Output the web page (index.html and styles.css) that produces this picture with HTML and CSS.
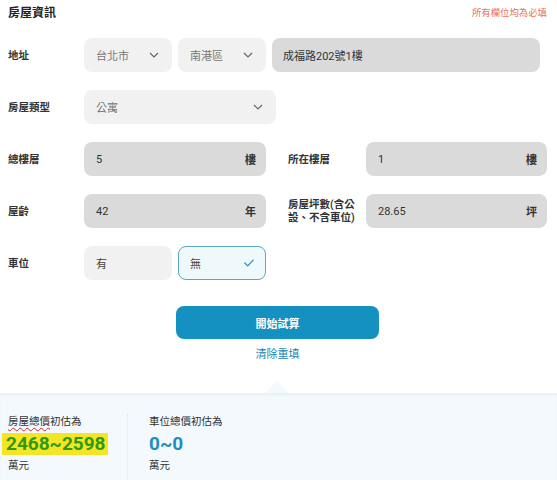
FILE: index.html
```html
<!DOCTYPE html>
<html lang="zh-Hant">
<head>
<meta charset="utf-8">
<title>房屋資訊</title>
<link rel="stylesheet" href="styles.css">
</head>
<body>
<div class="card">
  <div class="header">
    <h1 class="title">房屋資訊</h1>
    <span class="note">所有欄位均為必填</span>
  </div>
  <div class="form">
    <div class="label">地址</div>
    <div class="addr">
      <div class="select w88"><span>台北市</span><svg class="chev" viewBox="0 0 10 6"><polyline points="1,1 5,5 9,1"/></svg></div>
      <div class="select w88"><span>南港區</span><svg class="chev" viewBox="0 0 10 6"><polyline points="1,1 5,5 9,1"/></svg></div>
      <div class="input addr-input"><span class="val">成福路202號1樓</span></div>
    </div>

    <div class="label">房屋類型</div>
    <div class="span3">
      <div class="select w192"><span>公寓</span><svg class="chev" viewBox="0 0 10 6"><polyline points="1,1 5,5 9,1"/></svg></div>
    </div>

    <div class="label">總樓層</div>
    <div class="input"><span class="val">5</span><span class="unit">樓</span></div>
    <div class="label label2">所在樓層</div>
    <div class="input"><span class="val">1</span><span class="unit">樓</span></div>

    <div class="label">屋齡</div>
    <div class="input"><span class="val">42</span><span class="unit">年</span></div>
    <div class="label label2">房屋坪數(含公設、不含車位)</div>
    <div class="input"><span class="val">28.65</span><span class="unit">坪</span></div>

    <div class="label">車位</div>
    <div class="choices">
      <div class="choice w88">有</div>
      <div class="choice w88 active"><span>無</span><svg class="check" viewBox="0 0 12 9"><polyline points="1,4.5 4.5,8 11,1"/></svg></div>
    </div>
  </div>
  <div class="actions">
    <button class="btn">開始試算</button>
    <a class="reset" href="#">清除重填</a>
  </div>
</div>
<div class="result">
  <div class="col">
    <div class="cap"><span class="squiggle">房屋總價</span>初估為</div>
    <div class="num green"><span class="hl">2468~2598</span></div>
    <div class="cap">萬元</div>
  </div>
  <div class="col col2">
    <div class="cap">車位總價初估為</div>
    <div class="num blue">0~0</div>
    <div class="cap">萬元</div>
  </div>
</div>
</body>
</html>
```

FILE: styles.css
```css
html, body {
  margin: 0;
  padding: 0;
  background: #ffffff;
  font-family: Roboto, "Noto Sans CJK TC", "Noto Sans", sans-serif;
  color: #333333;
  height: 480px;
  overflow: hidden;
}

.card {
  background: #ffffff;
  padding: 0 10px 0 8px;
  height: 393px;
  box-sizing: border-box;
}

.header {
  height: 26px;
  display: flex;
  align-items: center;
  justify-content: space-between;
}

.title {
  margin: 0;
  font-size: 12px;
  font-weight: 700;
  color: #222222;
  line-height: 16px;
}

.note {
  font-size: 9.4px;
  color: #e8735a;
  line-height: 14px;
}

.form {
  margin-top: 12px;
  display: grid;
  grid-template-columns: 76px 182px 100px 181px;
  grid-auto-rows: 34px;
  row-gap: 18px;
}

.label {
  display: flex;
  align-items: center;
  font-size: 10.5px;
  font-weight: 600;
  color: #333333;
  line-height: 13px;
}

.label2 {
  padding-left: 22px;
  padding-right: 10px;
}

.addr {
  grid-column: 2 / 5;
  display: flex;
  gap: 6px;
}

.span3 {
  grid-column: 2 / 5;
  display: flex;
}

.select {
  box-sizing: border-box;
  height: 34px;
  border-radius: 8px;
  background: #f1f1f1;
  display: flex;
  align-items: center;
  justify-content: space-between;
  padding: 0 13px 0 12px;
  font-size: 11px;
  color: #777777;
}

.w88 { width: 88px; }
.w192 { width: 192px; }

.chev {
  width: 10px;
  height: 6px;
  fill: none;
  stroke: #666666;
  stroke-width: 1.2;
}

.input {
  box-sizing: border-box;
  height: 34px;
  border-radius: 8px;
  background: #dadadb;
  display: flex;
  align-items: center;
  justify-content: space-between;
  padding: 0 10px 0 12px;
  font-size: 11px;
  color: #333333;
}

.addr-input {
  width: 268px;
  padding-left: 11px;
}

.val { color: #333333; }

.unit {
  font-weight: 600;
  color: #333333;
}

.choices {
  grid-column: 2 / 5;
  display: flex;
  gap: 6px;
}

.choice {
  box-sizing: border-box;
  height: 34px;
  border-radius: 8px;
  background: #f1f1f1;
  display: flex;
  align-items: center;
  justify-content: space-between;
  padding: 0 12px;
  font-size: 11px;
  color: #444444;
}

.choice.active {
  background: #eff9fc;
  border: 1px solid #5aa7c0;
  padding: 0 11px;
}

.check {
  width: 10px;
  height: 8px;
  fill: none;
  stroke: #2f8fb5;
  stroke-width: 1.5;
  stroke-linecap: round;
  stroke-linejoin: round;
}

.actions {
  display: flex;
  flex-direction: column;
  align-items: center;
  margin-top: 26px;
}

.btn {
  width: 203px;
  height: 33px;
  border: none;
  border-radius: 8px;
  background: #1591c1;
  color: #ffffff;
  font-family: inherit;
  font-size: 11px;
  font-weight: 700;
  cursor: pointer;
}

.reset {
  margin-top: 8px;
  font-size: 11px;
  line-height: 16px;
  color: #1a86b0;
  text-decoration: none;
}

.result {
  position: relative;
  background: #f3f9fc;
  height: 87px;
  display: flex;
  padding: 21px 0 0 8px;
  box-sizing: border-box;
  box-shadow: inset 0 3px 4px -3px rgba(180, 200, 210, 0.4);
}

.result::before {
  content: "";
  position: absolute;
  left: 265px;
  top: -12px;
  width: 0;
  height: 0;
  border-left: 12px solid transparent;
  border-right: 12px solid transparent;
  border-bottom: 12px solid #f3f9fc;
}

.col {
  width: 119px;
  display: flex;
  flex-direction: column;
  border-right: 1px dotted #dfe6ea;
}

.col2 {
  border-right: none;
  padding-left: 21px;
}

.cap {
  font-size: 10.5px;
  line-height: 16px;
  color: #333333;
}

.squiggle {
  text-decoration: underline wavy #c62828;
  text-decoration-thickness: 1px;
  text-underline-offset: 2px;
}

.num {
  font-size: 19px;
  font-weight: 700;
  line-height: 22px;
  margin: 3px 0 3px -6px;
}

.num.green { color: #2e9a17; }
.num.blue { color: #1d8fbf; margin-left: 0; }

.hl {
  background: #f4e624;
  padding: 0 2px 0 4px;
  display: inline-block;
}
```
